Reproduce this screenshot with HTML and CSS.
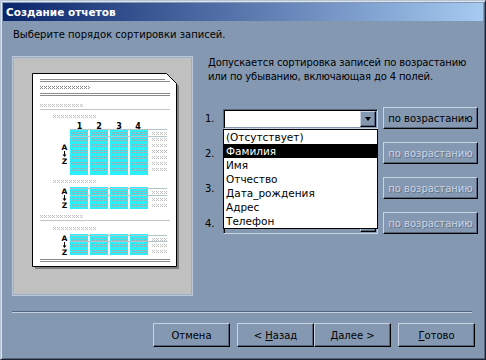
FILE: index.html
```html
<!DOCTYPE html>
<html lang="ru">
<head>
    <meta charset="UTF-8">
    <title>Создание отчетов</title>
    <link rel="stylesheet" href="styles.css">
</head>
<body>

    <div class="window">
        <div class="titlebar">Создание отчетов</div>

        <div class="content">
            <p class="intro">Выберите порядок сортировки записей.</p>

            <div class="main">
                <!-- Образец отчета -->
                <div class="preview">
                    <svg width="177" height="236" viewBox="14 58 177 236">
                        <defs>
                            <pattern id="xd" width="4" height="3" patternUnits="userSpaceOnUse">
                                <path d="M0 0h1v1H0zM2 0h1v1H2zM1 1h1v1H1zM0 2h1v1H0zM2 2h1v1H2z" fill="#8a8a8a"/>
                            </pattern>
                            <pattern id="xl" width="4" height="3" patternUnits="userSpaceOnUse">
                                <path d="M0 0h1v1H0zM2 0h1v1H2zM1 1h1v1H1zM0 2h1v1H0zM2 2h1v1H2z" fill="#c2c2c2"/>
                            </pattern>
                            <pattern id="xc" width="4" height="3" patternUnits="userSpaceOnUse">
                                <path d="M0 0h1v1H0zM2 0h1v1H2zM1 1h1v1H1zM0 2h1v1H0zM2 2h1v1H2z" fill="#90b0b8"/>
                            </pattern>
                            <g id="row">
                                <rect x="72" width="15" height="3" fill="url(#xc)"/>
                                <rect x="92" width="15" height="3" fill="url(#xc)"/>
                                <rect x="112" width="15" height="3" fill="url(#xc)"/>
                                <rect x="132" width="15" height="3" fill="url(#xc)"/>
                                <rect x="152" width="15" height="3" fill="url(#xl)"/>
                            </g>
                            <g id="az" font-family="DejaVu Sans" font-weight="bold" font-size="7.5" text-anchor="middle">
                                <text x="64.5" y="6.5">A</text>
                                <path d="M64.5 8v5" stroke="#000"/>
                                <path d="M62.5 11.5h4l-2 2.5z" fill="#000"/>
                                <text x="64.5" y="20.5">Z</text>
                            </g>
                        </defs>

                        <!-- лист -->
                        <path d="M35 76H169L179 86V269H35Z" fill="#808080"/>
                        <path d="M32.5 73.5H166.5L176.5 83.5V266.5H32.5Z" fill="#fff" stroke="#000"/>

                        <path d="M40 79.5H165M40 81.5H170M40 93.5H170M40 95.5H170" stroke="#8a8a8a"/>
                        <rect transform="translate(40 86)" width="50" height="3" fill="url(#xd)"/>

                        <rect transform="translate(40 104)" width="44" height="3" fill="url(#xl)"/>
                        <path d="M40 109.5H170" stroke="#c4c4c4"/>
                        <rect transform="translate(53 115)" width="44" height="3" fill="url(#xl)"/>

                        <g font-family="DejaVu Sans" font-weight="bold" font-size="8" text-anchor="middle">
                            <text x="79.5" y="128.5">1</text>
                            <text x="99" y="128.5">2</text>
                            <text x="119" y="128.5">3</text>
                            <text x="138" y="128.5">4</text>
                        </g>

                        <!-- группа 1 -->
                        <g fill="#2af0fa">
                            <rect x="70" y="129" width="18" height="46"/>
                            <rect x="90" y="129" width="18" height="46"/>
                            <rect x="110" y="129" width="18" height="46"/>
                            <rect x="130" y="129" width="18" height="46"/>
                        </g>
                        <path d="M70 129.5H167M70 136.5H167" stroke="#b4c4c8"/>
                        <use href="#row" y="132"/>
                        <use href="#row" y="138"/>
                        <use href="#row" y="144"/>
                        <use href="#row" y="150"/>
                        <use href="#row" y="156"/>
                        <use href="#row" y="162"/>
                        <use href="#row" y="168"/>
                        <use href="#az" y="143"/>

                        <!-- группа 2 -->
                        <rect transform="translate(53 180)" width="44" height="3" fill="url(#xl)"/>
                        <g fill="#2af0fa">
                            <rect x="70" y="187" width="18" height="22"/>
                            <rect x="90" y="187" width="18" height="22"/>
                            <rect x="110" y="187" width="18" height="22"/>
                            <rect x="130" y="187" width="18" height="22"/>
                        </g>
                        <path d="M70 188.5H167M70 195.5H167" stroke="#b4c4c8"/>
                        <use href="#row" y="191"/>
                        <use href="#row" y="198"/>
                        <use href="#row" y="204"/>
                        <use href="#az" y="187"/>

                        <!-- группа 3 -->
                        <rect transform="translate(40 215)" width="44" height="3" fill="url(#xl)"/>
                        <path d="M40 220.5H170" stroke="#c4c4c4"/>
                        <rect transform="translate(53 227)" width="44" height="3" fill="url(#xl)"/>
                        <g fill="#2af0fa">
                            <rect x="70" y="234" width="18" height="21"/>
                            <rect x="90" y="234" width="18" height="21"/>
                            <rect x="110" y="234" width="18" height="21"/>
                            <rect x="130" y="234" width="18" height="21"/>
                        </g>
                        <path d="M70 235.5H167M70 241.5H167" stroke="#b4c4c8"/>
                        <use href="#row" y="238"/>
                        <use href="#row" y="244"/>
                        <use href="#row" y="250"/>
                        <use href="#az" y="234"/>

                        <path d="M40 259.5H170M40 261.5H170" stroke="#8a8a8a"/>
                    </svg>
                </div>

                <div class="side">
                    <p class="hint">Допускается сортировка записей по возрастанию<br>или по убыванию, включающая до 4 полей.</p>

                    <div class="sort-rows">
                        <div class="sort-row">
                            <span class="num">1.</span>
                            <div class="combo">
                                <div class="combo-field"></div>
                                <div class="combo-arrow"></div>
                                <ul class="droplist">
                                    <li>(Отсутствует)</li>
                                    <li class="selected">Фамилия</li>
                                    <li>Имя</li>
                                    <li>Отчество</li>
                                    <li>Дата_рождения</li>
                                    <li>Адрес</li>
                                    <li>Телефон</li>
                                </ul>
                            </div>
                            <button class="btn order">по возрастанию</button>
                        </div>
                        <div class="sort-row">
                            <span class="num">2.</span>
                            <div class="combo disabled">
                                <div class="combo-field"></div>
                                <div class="combo-arrow"></div>
                            </div>
                            <button class="btn order" disabled>по возрастанию</button>
                        </div>
                        <div class="sort-row">
                            <span class="num">3.</span>
                            <div class="combo disabled">
                                <div class="combo-field"></div>
                                <div class="combo-arrow"></div>
                            </div>
                            <button class="btn order" disabled>по возрастанию</button>
                        </div>
                        <div class="sort-row">
                            <span class="num">4.</span>
                            <div class="combo disabled">
                                <div class="combo-field"></div>
                                <div class="combo-arrow"></div>
                            </div>
                            <button class="btn order" disabled>по возрастанию</button>
                        </div>
                    </div>
                </div>
            </div>

            <div class="separator"></div>

            <div class="footer">
                <button class="btn wide cancel">Отмена</button>
                <button class="btn wide">&lt; <u>Н</u>азад</button>
                <button class="btn wide next"><u>Д</u>алее &gt;</button>
                <button class="btn wide"><u>Г</u>отово</button>
            </div>
        </div>
    </div>

</body>
</html>
```

FILE: styles.css
```css
body {
    margin: 0;
    font-family: "DejaVu Sans", sans-serif;
    font-size: 10px;
    color: #000;
}

/* Окно мастера */
.window {
    width: 486px;
    height: 360px;
    box-sizing: border-box;
    background: #8598b2;
    border: 1px solid;
    border-color: #b7c4d6 #1b2333 #1b2333 #b7c4d6;
    box-shadow: inset 1px 1px 0 #dce4ee, inset -1px -1px 0 #56657c;
    padding: 2px;
    display: flex;
    flex-direction: column;
}
.titlebar {
    height: 18px;
    line-height: 18px;
    padding-left: 3px;
    background: linear-gradient(90deg, #0a246a, #a6caf0);
    color: #fff;
    font-weight: bold;
    font-size: 10.5px;
}
.content {
    flex: 1;
    padding-left: 9px;
    display: flex;
    flex-direction: column;
}
.intro {
    margin: 7px 0 0 1px;
    line-height: 13px;
}
.main {
    display: flex;
    gap: 9px;
    margin-top: 15px;
}

/* Образец */
.preview {
    width: 181px;
    height: 240px;
    box-sizing: border-box;
    border: 1px solid #b9c7d9;
    box-shadow: inset 0 0 0 1px #9fb0c6;
    padding: 1px;
    background: #c0c0c0;
}
.preview svg {
    display: block;
}

.side {
    width: 276px;
}
.hint {
    margin: 0 0 0 6px;
    line-height: 14px;
    letter-spacing: -0.15px;
}
.sort-rows {
    margin-top: 23px;
}
.sort-row {
    display: flex;
    height: 35px;
}
.num {
    width: 18px;
    padding-left: 3px;
    margin-top: 2px;
    line-height: 20px;
}

/* Поле со списком */
.combo {
    position: relative;
    width: 155px;
    height: 20px;
    margin-top: 2px;
    box-sizing: border-box;
    border: 1px solid;
    border-color: #56657c #c7d3e3 #c7d3e3 #56657c;
    box-shadow: inset 1px 1px 0 #000, inset -1px -1px 0 #8598b2;
    padding: 1px;
    display: flex;
}
.combo-field {
    flex: 1;
    background: #fff;
}
.combo.disabled .combo-field {
    background: #8598b2;
}
.combo-arrow {
    width: 16px;
    box-sizing: border-box;
    border: 1px solid;
    border-color: #c7d3e3 #000 #000 #c7d3e3;
    box-shadow: inset -1px -1px 0 #55647b;
    background: #8598b2;
    display: flex;
    align-items: center;
    justify-content: center;
}
.combo-arrow::after {
    content: "";
    border: solid transparent;
    border-width: 4px 3.5px 0;
    border-top-color: #000;
}
.combo.disabled .combo-arrow::after {
    border-top-color: #56657c;
}
.droplist {
    position: absolute;
    left: -1px;
    top: 19px;
    width: 155px;
    box-sizing: border-box;
    margin: 0;
    padding: 0;
    list-style: none;
    background: #fff;
    border: 1px solid #000;
    font-size: 10.5px;
    z-index: 2;
}
.droplist li {
    height: 14px;
    line-height: 14px;
    padding-left: 2px;
}
.droplist .selected {
    background: #000;
    color: #fff;
}

/* Кнопки */
.btn {
    box-sizing: border-box;
    background: #8598b2;
    border: 1px solid;
    border-color: #c7d3e3 #000 #000 #c7d3e3;
    box-shadow: inset -1px -1px 0 #55647b;
    padding: 0;
    font: inherit;
    color: #000;
}
.btn u {
    text-decoration: underline;
    text-underline-offset: 1px;
}
.order {
    width: 95px;
    height: 22px;
    margin-left: 5px;
}
.order:disabled {
    color: #cbd4e3;
    text-shadow: 1px 1px 0 #64738a;
}

.separator {
    width: 460px;
    margin-top: 15px;
    border-top: 1px solid #56657c;
    border-bottom: 1px solid #c3cfdf;
}
.footer {
    display: flex;
    justify-content: flex-end;
    margin-top: 10px;
    padding-right: 8px;
}
.wide {
    width: 77px;
    height: 24px;
}
.cancel,
.next {
    margin-right: 7px;
}
```
